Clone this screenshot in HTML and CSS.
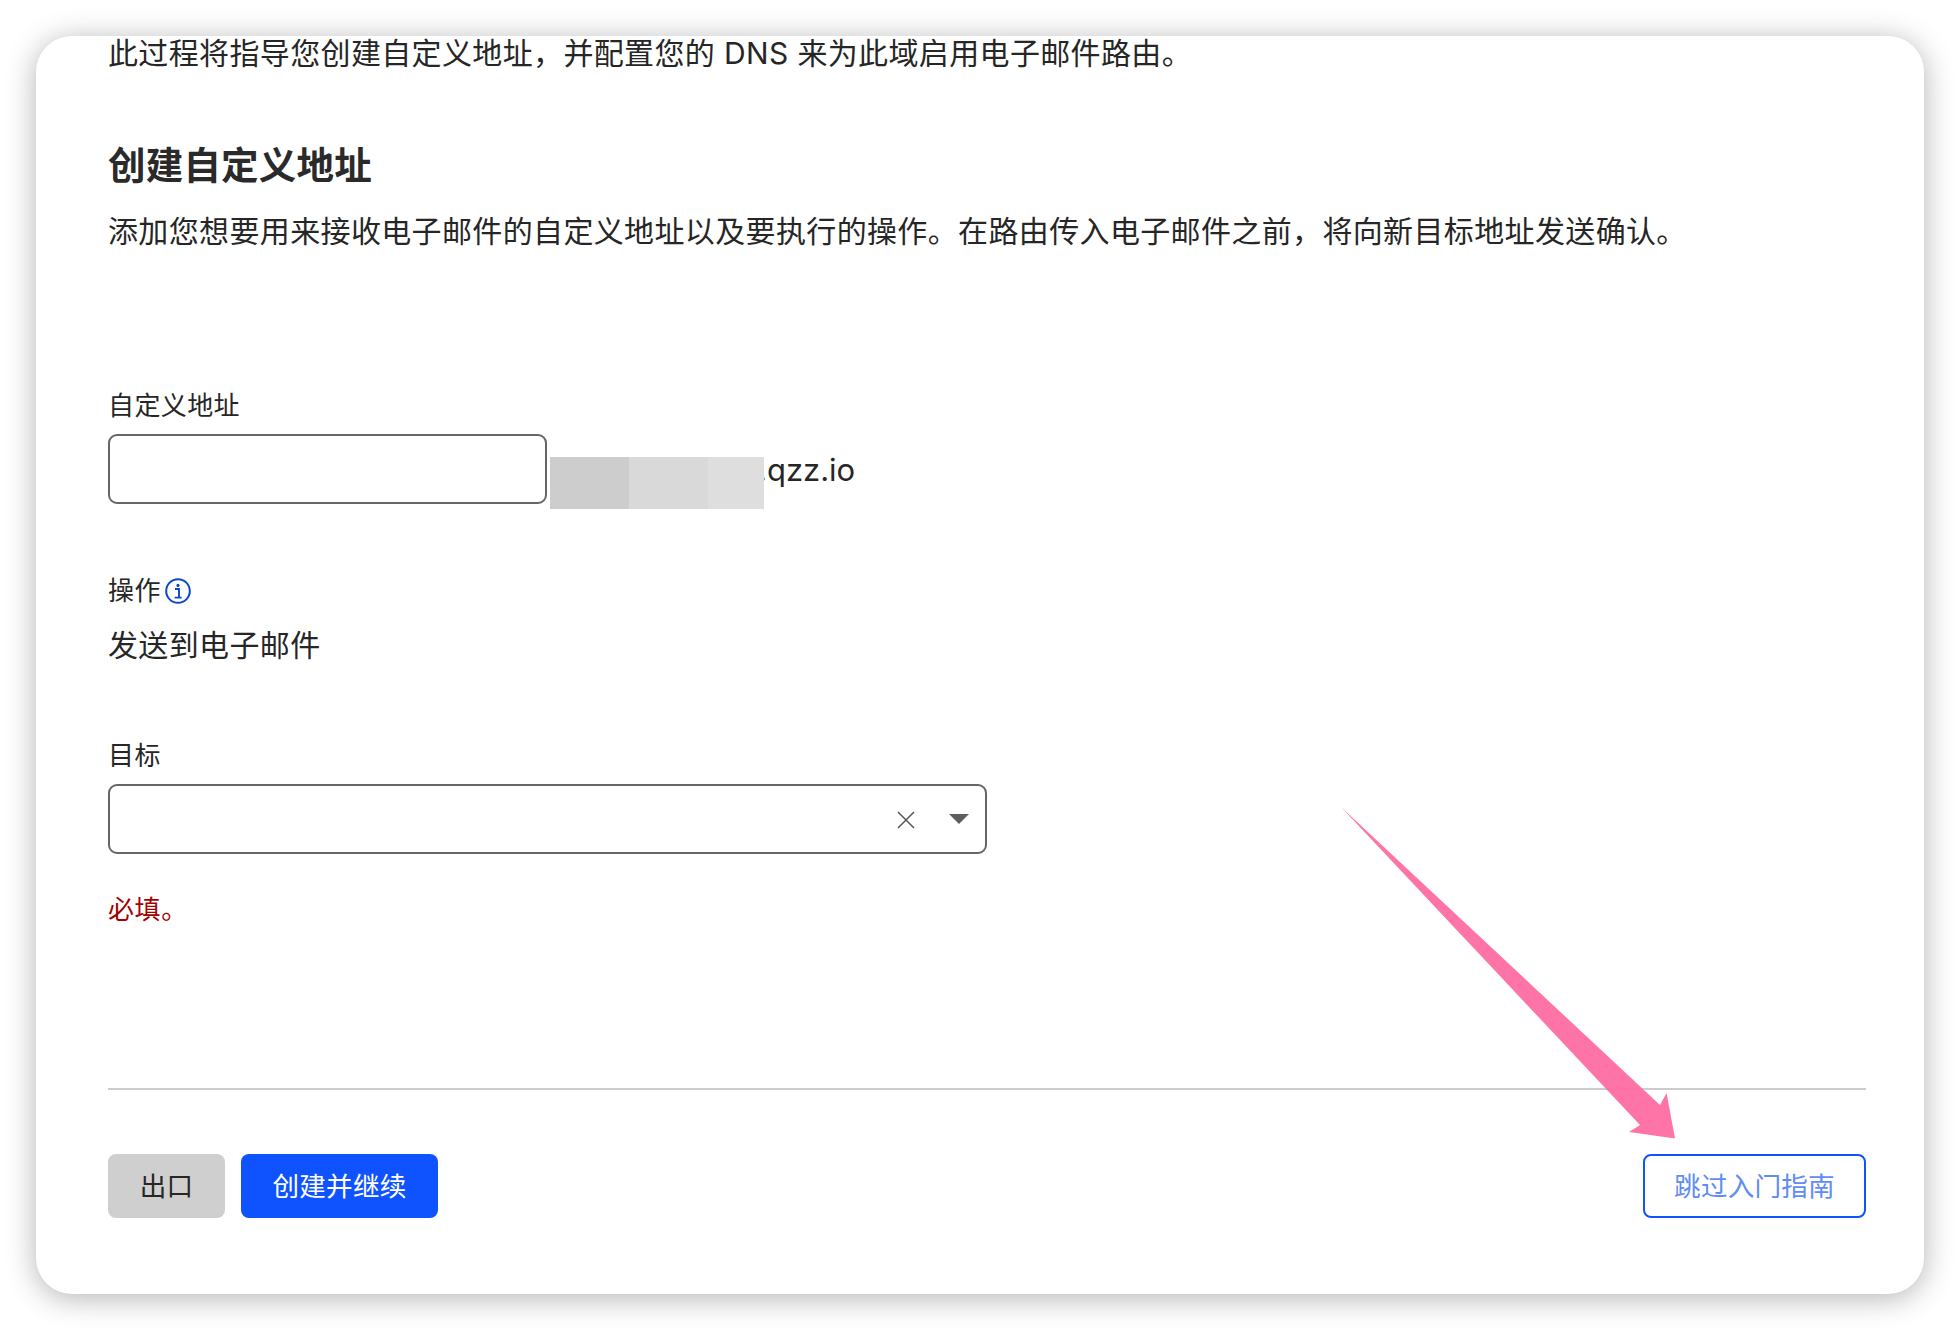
FILE: index.html
```html
<!DOCTYPE html>
<html lang="zh-CN">
<head>
<meta charset="utf-8">
<title>创建自定义地址</title>
<link rel="stylesheet" href="styles.css">
</head>
<body>
<main class="card">
  <p class="text intro">此过程将指导您创建自定义地址，并配置您的 DNS 来为此域启用电子邮件路由。</p>
  <h2 class="heading">创建自定义地址</h2>
  <p class="text desc">添加您想要用来接收电子邮件的自定义地址以及要执行的操作。在路由传入电子邮件之前，将向新目标地址发送确认。</p>

  <label class="label label-address">自定义地址</label>
  <div class="address-row">
    <div class="field field-short"></div>
    <div class="blur" aria-hidden="true">
      <span class="blur-a"></span><span class="blur-b"></span><span class="blur-c"></span>
    </div>
    <span class="domain">.qzz.io</span>
  </div>

  <div class="label label-action">
    <span>操作</span>
    <svg class="info" width="26" height="26" viewBox="0 0 26 26" fill="none">
      <circle cx="13" cy="13" r="11.8" stroke="#0b47c9" stroke-width="2"/>
      <circle cx="13" cy="7.4" r="1.6" fill="#0b47c9"/>
      <path d="M10 11h4v8.2M9.6 19.6h7" stroke="#0b47c9" stroke-width="1.9"/>
    </svg>
  </div>
  <p class="text action-value">发送到电子邮件</p>

  <label class="label label-target">目标</label>
  <div class="field field-long">
    <svg class="clear" width="20" height="20" viewBox="0 0 20 20" fill="none">
      <path d="M2 2l16 16M18 2L2 18" stroke="#555" stroke-width="1.5"/>
    </svg>
    <svg class="caret" width="20" height="10" viewBox="0 0 20 10">
      <path d="M0 0h20L10 10z" fill="#5b5f63"/>
    </svg>
  </div>
  <div class="error">必填。</div>

  <hr class="divider">

  <footer class="footer">
    <div class="footer-left">
      <button class="btn btn-exit">出口</button>
      <button class="btn btn-primary">创建并继续</button>
    </div>
    <button class="btn btn-skip"><span class="skip-text">跳过入门指南</span></button>
  </footer>
</main>

<svg class="arrow" width="1960" height="1330" viewBox="0 0 1960 1330">
  <path d="M1341 807L1660 1105L1666.6 1093L1675 1138.5L1629 1132L1640 1125Z" fill="#ff6ea3" fill-opacity=".96"/>
</svg>
</body>
</html>
```
FILE: styles.css
```css
* { box-sizing: border-box; }

html, body {
  margin: 0;
  height: 1330px;
  overflow: hidden;
  background: #fff;
}

body {
  padding: 36px;
  font-family: Inter, "Noto Sans CJK SC", sans-serif;
  color: #262626;
}

.card {
  display: flex;
  flex-direction: column;
  align-items: flex-start;
  width: 1888px;
  height: 1258px;
  padding: 0 58px 0 72px;
  background: #fff;
  border-radius: 36px;
  box-shadow: 0 4px 30px rgba(0, 0, 0, .3);
  overflow: hidden;
}

.text {
  margin: 0;
  font-size: 30px;
  line-height: 36px;
  letter-spacing: .36px;
  white-space: nowrap;
}

.intro { margin-top: -1px; }

.heading {
  margin: 71px 0 0;
  font-size: 37.5px;
  line-height: 48px;
  letter-spacing: .2px;
  font-weight: 700;
  color: #2a2a2a;
}

.desc { margin-top: 23px; }

.label {
  display: flex;
  align-items: center;
  gap: 4px;
  font-size: 26px;
  line-height: 30px;
  letter-spacing: .4px;
}

.label-address { margin-top: 142px; }
.label-action { margin-top: 72px; }
.label-target { margin-top: 78px; }

.address-row {
  display: flex;
  align-items: center;
  margin-top: 13px;
  height: 70px;
}

.field {
  display: flex;
  align-items: center;
  justify-content: flex-end;
  height: 70px;
  background: #fff;
  border: 2px solid #666;
  border-radius: 9px;
}

.field-short { width: 439px; }

.field-long {
  width: 879px;
  margin-top: 13px;
  padding-right: 16px;
}

.blur {
  position: relative;
  z-index: 1;
  display: flex;
  align-self: flex-start;
  width: 214px;
  height: 52px;
  margin: 23px 0 0 3px;
}

.blur-a { width: 79px; background: #cdcdcd; }
.blur-b { width: 79px; background: #d9d9d9; }
.blur-c { width: 56px; background: #dedede; }

.domain {
  margin: 2px 0 0 -6px;
  font-size: 31px;
  line-height: 36px;
  color: #262626;
}

.clear { margin-right: 33px; margin-top: 2px; }
.caret { margin-top: 0; }

.action-value { margin-top: 21px; }

.error {
  margin-top: 41px;
  font-size: 26px;
  line-height: 30px;
  letter-spacing: .6px;
  color: #a30000;
}

.divider {
  align-self: stretch;
  height: 2px;
  margin: 163px 0 0;
  border: 0;
  background: #cccccc;
}

.footer {
  display: flex;
  justify-content: space-between;
  align-self: stretch;
  margin-top: 64px;
}

.footer-left {
  display: flex;
  gap: 16px;
}

.btn {
  height: 64px;
  padding: 0;
  border: 0;
  border-radius: 8px;
  font-family: inherit;
  font-size: 26.6px;
  line-height: 32px;
  letter-spacing: .2px;
}

.btn-exit {
  width: 117px;
  background: #cfcfcf;
  color: #262626;
}

.btn-primary {
  width: 197px;
  background: #0f52ff;
  color: #fff;
}

.btn-skip {
  width: 223px;
  background: #fff;
  border: 2px solid #0f52ff;
}

.skip-text { color: #5f8cf6; }

.arrow {
  position: absolute;
  top: 0;
  left: 0;
  pointer-events: none;
}
```
